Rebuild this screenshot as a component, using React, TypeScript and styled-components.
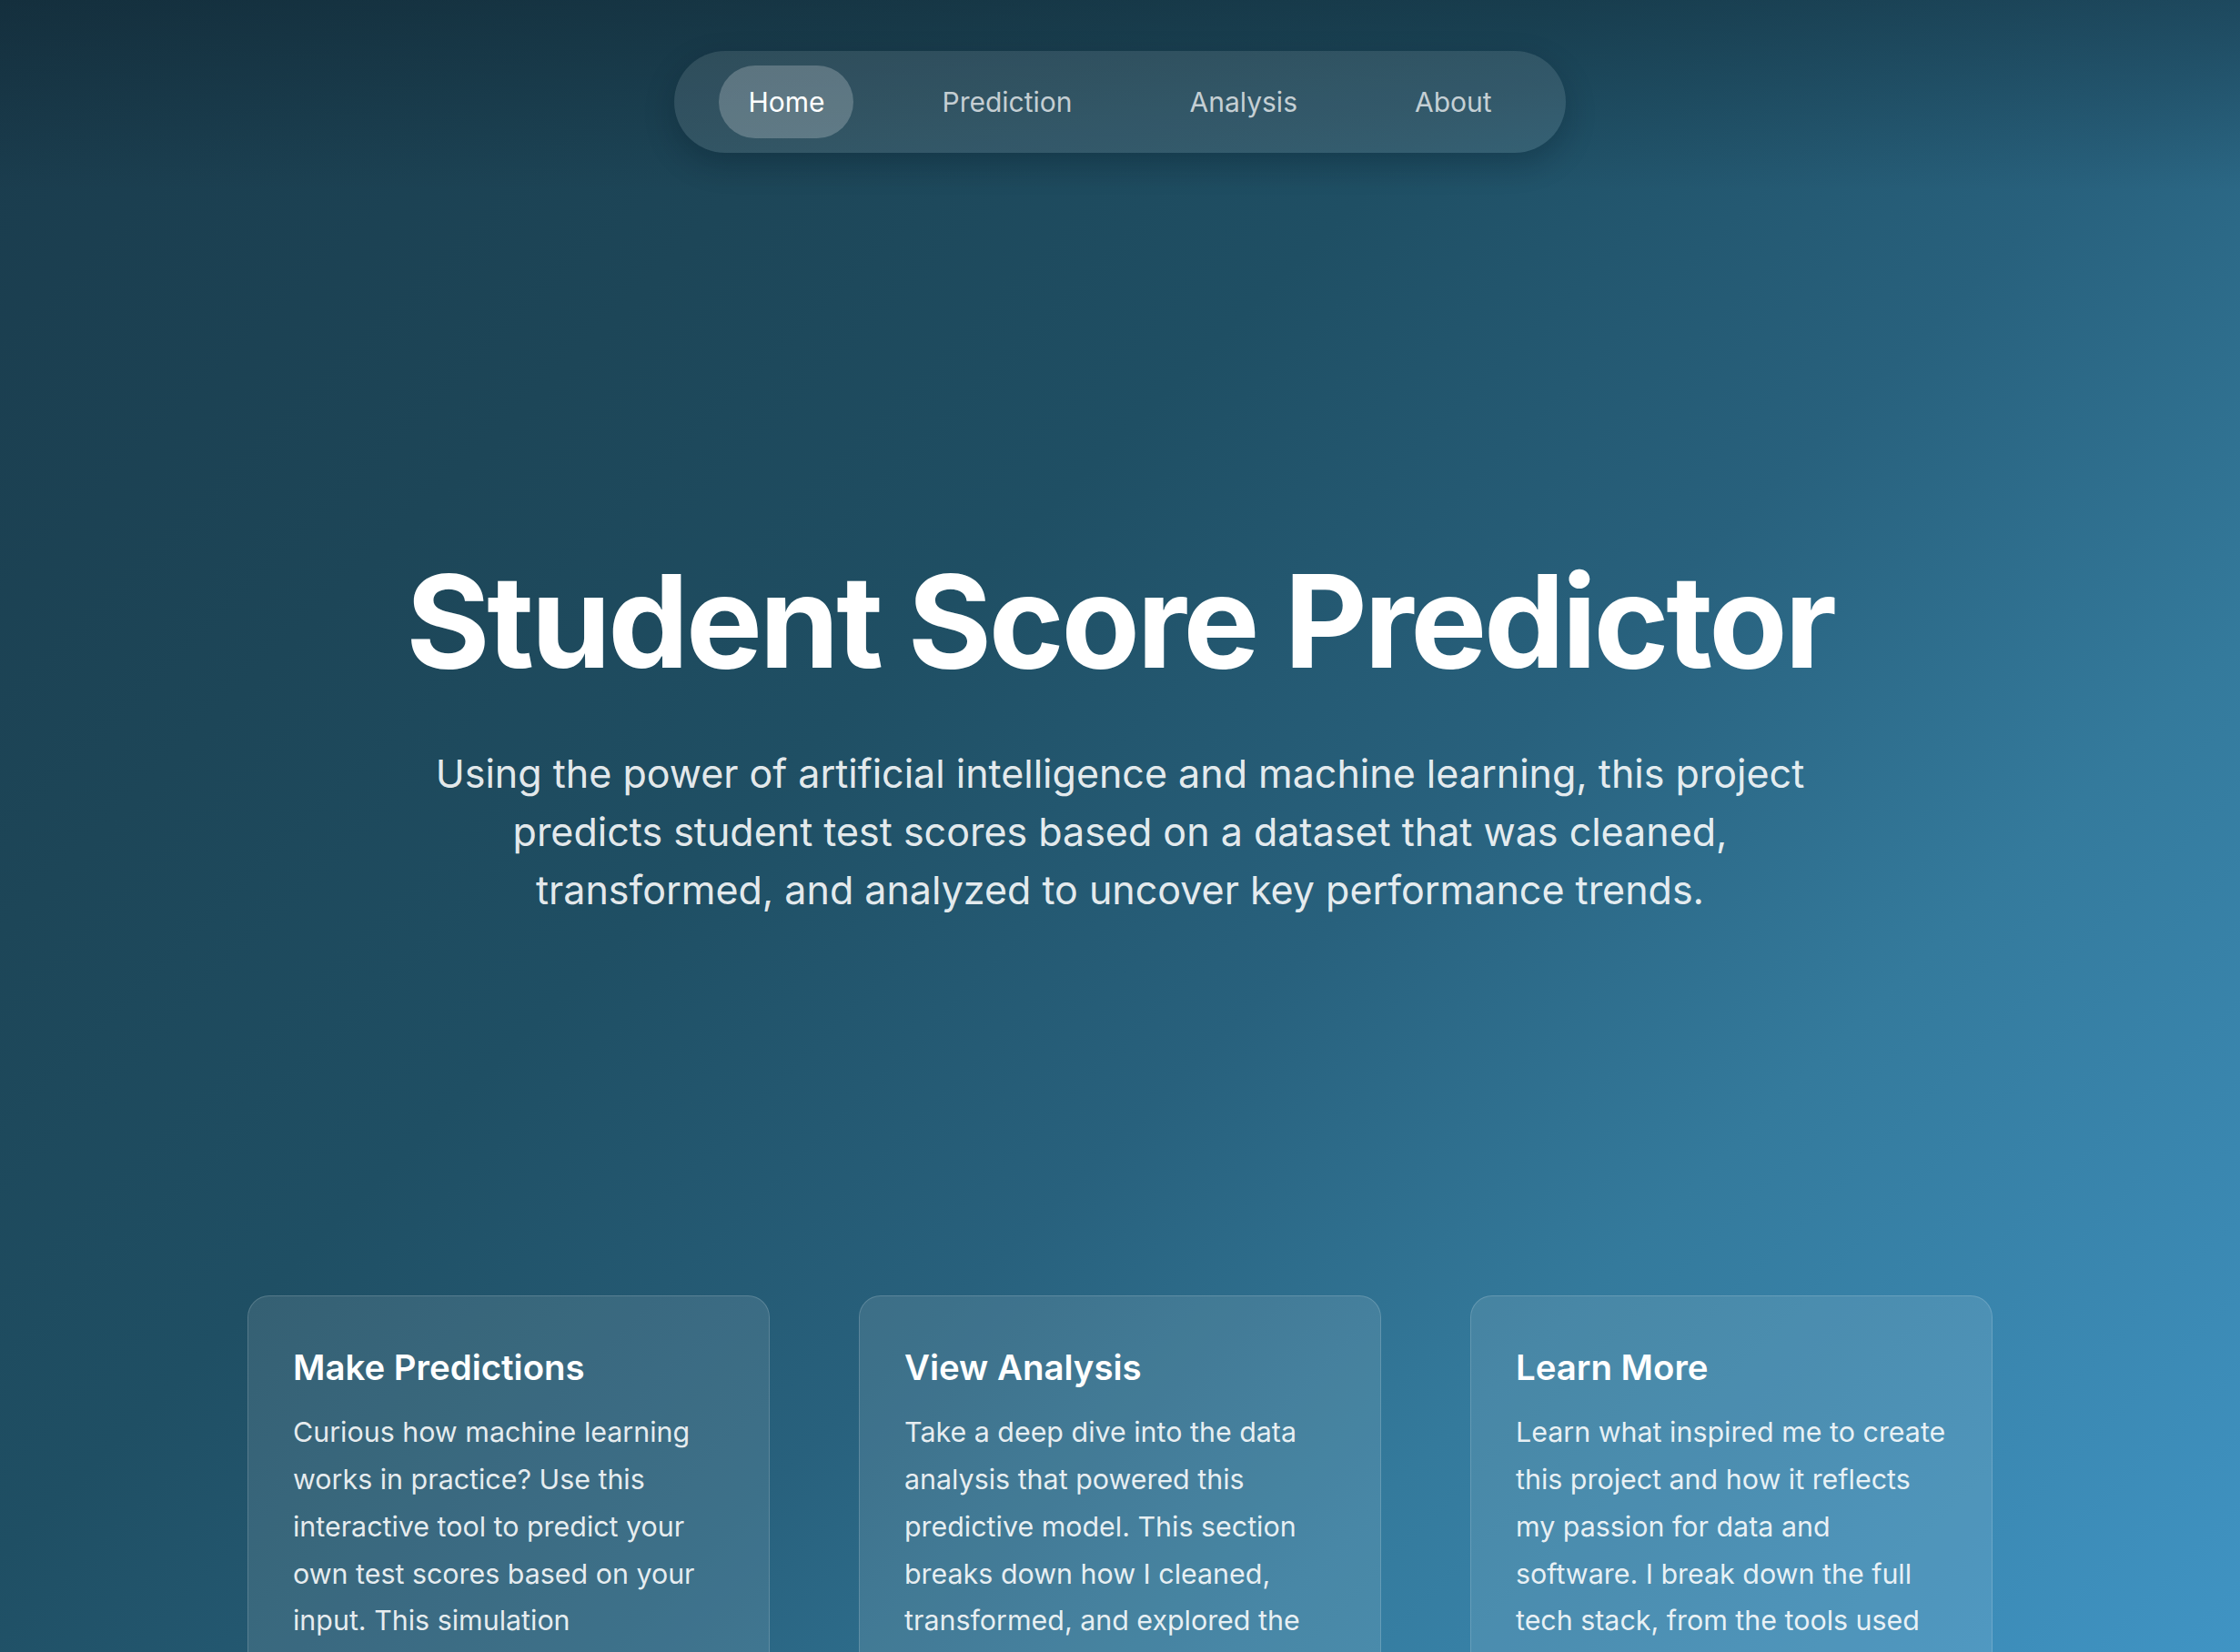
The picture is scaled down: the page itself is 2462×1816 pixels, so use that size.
import React from "react";
import styled, { createGlobalStyle } from "styled-components";

const GlobalStyle = createGlobalStyle`
  html {
    scrollbar-width: none;
  }
  html::-webkit-scrollbar { display: none; }
  body {
    margin: 0;
    min-height: 100vh;
    font-family: Inter, "Noto Sans", "Liberation Sans", sans-serif;
    color: #ffffff;
    background:
      linear-gradient(180deg, rgba(8, 22, 30, 0.32) 0px, rgba(8, 22, 30, 0) 210px),
      linear-gradient(135deg, #1a3b4c 0%, #1d4658 24%, #1f4f64 40%, #28617d 58%, #347a9c 74%, #4094c4 100%);
    background-attachment: fixed;
    -webkit-font-smoothing: antialiased;
  }
  * { box-sizing: border-box; }
`;

const Page = styled.div`
  display: flex;
  flex-direction: column;
  align-items: center;
  padding-top: 56px;
`;

const Nav = styled.nav`
  display: flex;
  align-items: center;
  gap: 65px;
  height: 112px;
  padding: 0 49px;
  border-radius: 56px;
  background: rgba(255, 255, 255, 0.1);
  box-shadow: 0 12px 32px rgba(5, 20, 30, 0.25);
`;

const NavLink = styled.a<{ $active?: boolean }>`
  display: flex;
  align-items: center;
  height: 80px;
  padding: 0 32px;
  border-radius: 40px;
  font-size: 30px;
  font-weight: 400;
  text-decoration: none;
  color: ${(p) => (p.$active ? "#ffffff" : "rgba(255, 255, 255, 0.72)")};
  background: ${(p) => (p.$active ? "rgba(255, 255, 255, 0.22)" : "transparent")};
  cursor: pointer;
`;

const Hero = styled.section`
  display: flex;
  flex-direction: column;
  align-items: center;
  padding: 437px 0 414px;
  text-align: center;
`;

const Title = styled.h1`
  margin: 0;
  font-size: 141px;
  line-height: 155px;
  font-weight: 700;
  letter-spacing: -0.023em;
  color: #ffffff;
`;

const Subtitle = styled.p`
  margin: 58px 0 0;
  max-width: 1560px;
  font-size: 43px;
  line-height: 64px;
  font-weight: 400;
  color: rgba(255, 255, 255, 0.9);
`;

const Cards = styled.section`
  display: grid;
  grid-template-columns: repeat(3, 574px);
  gap: 98px;
  padding-bottom: 120px;
`;

const Card = styled.article`
  padding: 55px 46px 60px 49px;
  border-radius: 24px;
  border: 1px solid rgba(255, 255, 255, 0.16);
  background: rgba(255, 255, 255, 0.1);
`;

const CardTitle = styled.h2`
  margin: 0;
  font-size: 38.4px;
  line-height: 46px;
  font-weight: 600;
  color: #ffffff;
`;

const CardText = styled.p`
  margin: 23px 0 0;
  font-size: 30.4px;
  line-height: 51.84px;
  font-weight: 400;
  color: rgba(255, 255, 255, 0.88);
`;

const links = [
  { label: "Home", active: true },
  { label: "Prediction" },
  { label: "Analysis" },
  { label: "About" },
];

const cards = [
  {
    title: "Make Predictions",
    text:
      "Curious how machine learning works in practice? Use this interactive tool to predict your own test scores based on your input. This simulation demonstrates how the model responds to different study habits and background factors.",
  },
  {
    title: "View Analysis",
    text:
      "Take a deep dive into the data analysis that powered this predictive model. This section breaks down how I cleaned, transformed, and explored the dataset to uncover the factors that matter most.",
  },
  {
    title: "Learn More",
    text:
      "Learn what inspired me to create this project and how it reflects my passion for data and software. I break down the full tech stack, from the tools used to build the model to the web app itself.",
  },
];

export default function App() {
  return (
    <>
      <GlobalStyle />
      <Page>
        <Nav>
          {links.map((l) => (
            <NavLink key={l.label} $active={l.active}>
              {l.label}
            </NavLink>
          ))}
        </Nav>
        <Hero>
          <Title>Student Score Predictor</Title>
          <Subtitle>
            Using the power of artificial intelligence and machine learning, this project
            predicts student test scores based on a dataset that was cleaned, transformed,
            and analyzed to uncover key performance trends.
          </Subtitle>
        </Hero>
        <Cards>
          {cards.map((c) => (
            <Card key={c.title}>
              <CardTitle>{c.title}</CardTitle>
              <CardText>{c.text}</CardText>
            </Card>
          ))}
        </Cards>
      </Page>
    </>
  );
}
